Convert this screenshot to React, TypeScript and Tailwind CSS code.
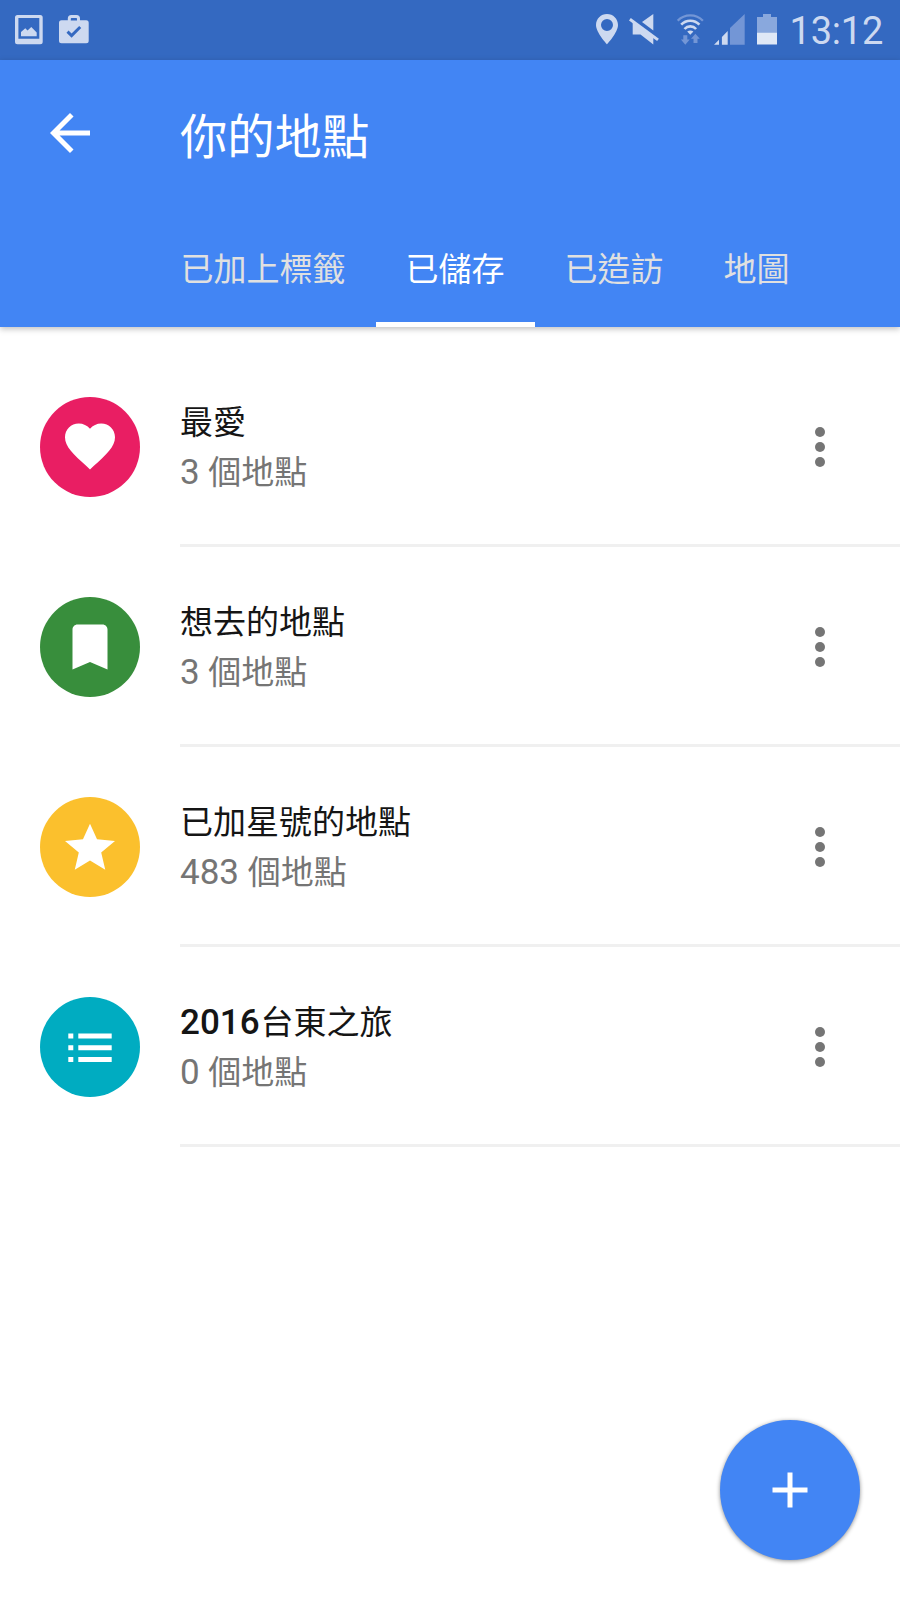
import type { ReactNode } from 'react';
import clsx from 'clsx';

type Place = {
  id: string;
  prefix?: string;
  title: string;
  count: number;
  color: string;
  icon: ReactNode;
};

const iconClass = 'size-[60px] fill-white';

const places: Place[] = [
  {
    id: 'favorites',
    title: '最愛',
    count: 3,
    color: 'bg-[#e91e63]',
    icon: (
      <svg viewBox="0 0.4 24 24" className={iconClass}>
        <path d="M12 21.35l-1.45-1.32C5.4 15.36 2 12.28 2 8.5 2 5.42 4.42 3 7.5 3c1.74 0 3.41.81 4.5 2.09C13.09 3.81 14.76 3 16.5 3 19.58 3 22 5.42 22 8.5c0 3.78-3.4 6.86-8.55 11.54L12 21.35z" />
      </svg>
    ),
  },
  {
    id: 'want-to-go',
    title: '想去的地點',
    count: 3,
    color: 'bg-[#388e3c]',
    icon: (
      <svg viewBox="0 0 24 24" className={iconClass}>
        <path d="M17 3H7c-1.1 0-2 .9-2 2v16l7-3 7 3V5c0-1.1-.9-2-2-2z" />
      </svg>
    ),
  },
  {
    id: 'starred',
    title: '已加星號的地點',
    count: 483,
    color: 'bg-[#fbc02d]',
    icon: (
      <svg viewBox="0 0 24 24" className={iconClass}>
        <path d="M12 17.4L18.1 21.1l-1.62-6.95L22 9.55l-7.19-.61L12 2.7 9.19 8.94 2 9.55l5.52 4.6L5.9 21.1z" />
      </svg>
    ),
  },
  {
    id: 'taitung',
    prefix: '2016',
    title: '台東之旅',
    count: 0,
    color: 'bg-[#00acc1]',
    icon: (
      <svg viewBox="0 0 60 60" className={iconClass}>
        <path d="M8.3 16.4h5v5h-5zM18.3 16.4h33.4v5H18.3zM8.3 28.2h5v5h-5zM18.3 28.2h33.4v5H18.3zM8.3 40h5v5h-5zM18.3 40h33.4v5H18.3z" />
      </svg>
    ),
  },
];

const tabs = ['已加上標籤', '已儲存', '已造訪', '地圖'];

function StatusBar() {
  return (
    <div className="flex h-[60px] items-start bg-[#3469c1] pt-[14px] pr-[17px] pl-[15px] text-[#cdd9f0]">
      <svg width="28" height="30" viewBox="0 0 28 30" fill="currentColor" className="mt-px">
        <path
          fillRule="evenodd"
          d="M2.5 0h22.7a2.5 2.5 0 0 1 2.5 2.5v24.3a2.5 2.5 0 0 1-2.5 2.5H2.5A2.5 2.5 0 0 1 0 26.8V2.5A2.5 2.5 0 0 1 2.5 0zM3.4 3v20.7h20.9V3z"
        />
        <path d="M6 21.3V17l4.3-3.7 2.2 2.2 3.8-3.5 5.4 5.5v3.8z" />
      </svg>
      <svg width="30" height="30" viewBox="0 0 30 30" fill="currentColor" className="mt-px ml-[16px]">
        <path
          fillRule="evenodd"
          d="M8.8 5.3V3.5A3.5 3.5 0 0 1 12.3 0h5.2A3.5 3.5 0 0 1 21 3.5v1.8h6.2a2.5 2.5 0 0 1 2.5 2.5v18a2.5 2.5 0 0 1-2.5 2.5H2.5A2.5 2.5 0 0 1 0 25.8v-18a2.5 2.5 0 0 1 2.5-2.5zM11.8 5.5H18V3.6l-.6-.6h-5l-.6.6z"
        />
        <path d="M8.5 16.6l4.1 4 8.6-8.6" fill="none" stroke="#3469c1" strokeWidth="2.9" />
      </svg>

      {/* location, muted, wifi, signal, battery */}
      <svg width="22" height="31" viewBox="0 0 22 31" fill="currentColor" className="ml-auto">
        <path
          fillRule="evenodd"
          d="M11 0C4.9 0 0 4.8 0 11c0 7.6 11 19.3 11 19.3S22 18.6 22 11C22 4.8 17.1 0 11 0zm0 4.9a6 6 0 1 1 0 12 6 6 0 0 1 0-12z"
        />
      </svg>
      <svg width="31" height="31" viewBox="0 0 31 31" fill="currentColor" className="ml-[11px]">
        <path d="M24.3 0v16.6L13 8z" />
        <path d="M3.7 7v13.6h7.8l12.8 10V22z" />
        <path d="M.9 5.2L29 25.9" stroke="currentColor" strokeWidth="3" />
      </svg>
      <svg width="27" height="31" viewBox="0 0 27 31" fill="none" stroke="currentColor" className="ml-[17px]">
        <path d="M.7 6.7a17.6 17.6 0 0 1 25.2 0" stroke="#7396d6" strokeWidth="2.3" />
        <path d="M4.2 10.7a12.3 12.3 0 0 1 18.2 0" strokeWidth="2.6" />
        <path d="M7.5 15a7.8 7.8 0 0 1 11.6 0" strokeWidth="2.6" />
        <path d="M10.2 17.5q3.1-2.2 6.2 0l-3.1 3.2z" fill="currentColor" stroke="none" />
        <path
          d="M6.3 21.3h4v4.2h2.4l-4.4 5.2-4.4-5.2h2.4zM16.5 29h4v-4.2h2.3l-4.4-5.1-4.4 5.1h2.5z"
          fill="#7396d6"
          stroke="none"
        />
      </svg>
      <svg width="31" height="31" viewBox="0 0 31 31" fill="currentColor" className="ml-[10px]">
        <path d="M0 30.7l5-5v5zM7.9 23l5.8-6v13.7H7.9z" />
        <path d="M16 14L30.7 0v30.7H16z" fill="#7396d6" />
      </svg>
      <svg width="20" height="31" viewBox="0 0 20 31" className="ml-[12px]">
        <path d="M6 0h8v3h6v15.5H0V3h6z" fill="#89a8dd" />
        <path d="M0 18.5h20v12H0z" fill="#dfe8f6" />
      </svg>
      <span className="ml-[13px] font-[Roboto] text-[38px] leading-[34px] tracking-[-0.25px]">13:12</span>
    </div>
  );
}

function Header() {
  return (
    <header className="relative z-10 flex h-[267px] flex-col bg-[#4285f4] shadow-[0_2px_6px_rgba(0,0,0,0.25)]">
      <div className="flex h-[146px] items-center pl-[40px]">
        <button type="button" aria-label="返回">
          <svg viewBox="0 0 24 24" className="size-[60px] fill-white">
            <path d="M20 11H7.83l5.59-5.59L12 4l-8 8 8 8 1.41-1.41L7.83 13H20v-2z" />
          </svg>
        </button>
        <h1 className="ml-[80px] pt-[9px] text-[47.3px] leading-[60px] text-white">你的地點</h1>
      </div>
      <nav className="flex flex-1 pl-[150.5px]">
        {tabs.map((tab, i) => (
          <button
            key={tab}
            type="button"
            className={clsx(
              'flex items-center border-b-[5px] px-[30px] pt-[11px] text-[33px] leading-none',
              i === 1 ? 'border-white text-white' : 'border-transparent text-[#e0e0e0]',
            )}
          >
            {tab}
          </button>
        ))}
      </nav>
    </header>
  );
}

function PlaceRow({ place }: { place: Place }) {
  return (
    <li className="flex h-[200px] pl-[40px]">
      <div className={clsx('mt-[50px] flex size-[100px] items-center justify-center rounded-full', place.color)}>
        {place.icon}
      </div>
      <div className="ml-[40px] flex flex-1 items-start border-b-[3px] border-[#f0f0f0] pt-[50px]">
        {/* latin digits run slightly larger than the CJK glyphs beside them */}
        <div className="flex-1 text-[33px] leading-[51px]">
          <p className="h-[50px] text-[#151515]">
            {place.prefix && <span className="mr-px text-[35px] leading-none font-medium">{place.prefix}</span>}
            {place.title}
          </p>
          <p className="h-[51px] text-[#757575]">
            <span className="text-[35px] leading-none whitespace-pre">{place.count} </span>
            個地點
          </p>
        </div>
        <button type="button" aria-label="更多選項" className="mt-[20px] mr-[50px]">
          <svg viewBox="0 0 60 60" className="size-[60px] fill-[#757575]">
            <circle cx="30" cy="15" r="5" />
            <circle cx="30" cy="30" r="5" />
            <circle cx="30" cy="45" r="5" />
          </svg>
        </button>
      </div>
    </li>
  );
}

export default function App() {
  return (
    <div className="relative h-[1600px] w-[900px] overflow-hidden bg-white font-[Roboto,'Noto_Sans_CJK_TC',sans-serif]">
      <StatusBar />
      <Header />
      <ul className="pt-[20px]">
        {places.map((place) => (
          <PlaceRow key={place.id} place={place} />
        ))}
      </ul>
      <button
        type="button"
        aria-label="新增清單"
        className="absolute right-[40px] bottom-[40px] flex size-[140px] items-center justify-center rounded-full bg-[#4285f4] shadow-[0_1px_4px_rgba(0,0,0,0.45)]"
      >
        <svg viewBox="0 0 24 24" className="size-[60px] fill-white">
          <path d="M19 13h-6v6h-2v-6H5v-2h6V5h2v6h6v2z" />
        </svg>
      </button>
    </div>
  );
}
